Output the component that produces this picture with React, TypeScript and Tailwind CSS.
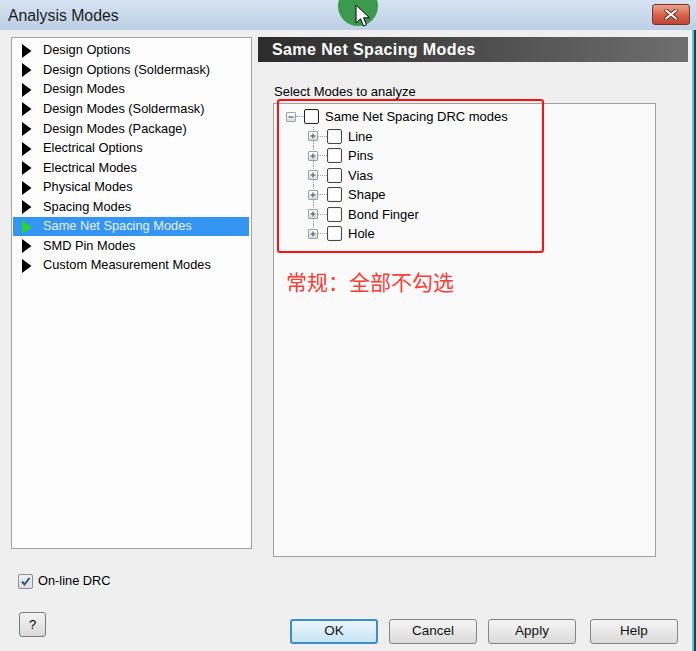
import React from "react";

const listItems = [
  "Design Options",
  "Design Options (Soldermask)",
  "Design Modes",
  "Design Modes (Soldermask)",
  "Design Modes (Package)",
  "Electrical Options",
  "Electrical Modes",
  "Physical Modes",
  "Spacing Modes",
  "Same Net Spacing Modes",
  "SMD Pin Modes",
  "Custom Measurement Modes",
];

const treeChildren = ["Line", "Pins", "Vias", "Shape", "Bond Finger", "Hole"];

function Triangle({ color }: { color: string }) {
  return (
    <svg width="10" height="14" viewBox="0 0 10 14" className="shrink-0">
      <path d="M0 0 L9.5 7 L0 14 Z" fill={color} />
    </svg>
  );
}

function ExpandBox({ plus }: { plus: boolean }) {
  return (
    <div className="relative w-[10px] h-[10px] shrink-0 border border-[#9aa0a8] rounded-[1px] bg-linear-to-b from-white to-[#dcdcdc] flex items-center justify-center">
      <svg width="8" height="8" viewBox="0 0 8 8">
        <path d="M1.5 4 H6.5" stroke="#5a6270" strokeWidth="1.2" />
        {plus && <path d="M4 1.5 V6.5" stroke="#5a6270" strokeWidth="1.2" />}
      </svg>
    </div>
  );
}

function TreeCheck({ dark }: { dark?: boolean }) {
  return (
    <div
      className={`w-[15px] h-[15px] shrink-0 rounded-[2px] bg-white border ${
        dark ? "border-[#262626]" : "border-[#474747]"
      } shadow-[inset_0_0_0_1px_#f4f4f4]`}
    />
  );
}

function Button({ label, primary }: { label: string; primary?: boolean }) {
  return (
    <div
      className={`w-[88px] h-[25px] rounded-[3px] flex items-center justify-center text-[13.5px] text-[#111] ${
        primary
          ? "border-2 border-[#3d8ec4] bg-linear-to-b from-[#eaf6fd] to-[#c6e4f5]"
          : "border border-[#858585] bg-linear-to-b from-[#f6f6f6] to-[#dadada]"
      }`}
    >
      {label}
    </div>
  );
}

export default function App() {
  return (
    <div className="relative w-[696px] h-[651px] overflow-hidden bg-[#efefef] font-['Liberation_Sans',Arial,sans-serif] text-black">
      {/* Title bar */}
      <div className="h-[30px] flex items-center pl-[8px] bg-linear-to-b from-[#d6e3f2] to-[#bccfe4]">
        <span className="text-[15.8px] text-[#1c1c1c] leading-none mt-[1px]">Analysis Modes</span>
        <div className="ml-auto mr-[6px] mb-[2px] w-[38px] h-[21px] rounded-[3px] border border-[#7a3326] bg-linear-to-b from-[#eaa592] via-[#d6654e] to-[#c2452f] flex items-center justify-center">
          <svg width="14" height="11" viewBox="0 0 14 11">
            <path d="M2 1.5 L12 9.5 M12 1.5 L2 9.5" stroke="#5a1e14" strokeWidth="3.6" strokeLinecap="round" />
            <path d="M2 1.5 L12 9.5 M12 1.5 L2 9.5" stroke="#ffffff" strokeWidth="2.2" strokeLinecap="round" />
          </svg>
        </div>
      </div>

      {/* Body */}
      <div className="flex h-[621px]">
        <div className="w-[692px] flex pl-[11px] pt-[7px]">
          {/* Left column */}
          <div className="w-[241px] flex flex-col">
            <div className="h-[512px] bg-[#fdfdfd] border border-[#a3a3a3] pt-[3px]">
              {listItems.map((item, i) => {
                const sel = i === 9;
                return (
                  <div
                    key={item}
                    className={`h-[19.55px] mx-px mr-[2px] flex items-center pl-[9px] ${
                      sel ? "bg-[#3595f2]" : ""
                    }`}
                  >
                    <Triangle color={sel ? "#24d62a" : "#000000"} />
                    <span
                      className={`ml-[11px] text-[12.8px] leading-none whitespace-nowrap ${
                        sel ? "text-[#e9f1ff]" : "text-black"
                      }`}
                    >
                      {item}
                    </span>
                  </div>
                );
              })}
            </div>

            <div className="mt-[25px] h-[15px] flex items-center ml-[7px]">
              <div className="w-[15px] h-[15px] border border-[#8e8f8f] rounded-[2px] bg-linear-to-b from-[#f0f0f0] to-[#dedede] flex items-center justify-center">
                <svg width="11" height="11" viewBox="0 0 11 11">
                  <path d="M2 5.5 L4.5 8.5 L9.5 2" stroke="#2c4f8f" strokeWidth="2" fill="none" />
                </svg>
              </div>
              <span className="ml-[5px] text-[12.8px] leading-none">On-line DRC</span>
            </div>

            <div className="mt-[23px] ml-[8px] w-[27px] h-[25px] rounded-[3px] border border-[#7a7a7a] bg-linear-to-b from-[#f4f4f4] to-[#d9d9d9] flex items-center justify-center text-[13px]">
              ?
            </div>
          </div>

          {/* Right column */}
          <div className="ml-[6px] w-[430px] flex flex-col">
            <div className="h-[25px] bg-linear-to-r from-[#2c2c2c] to-[#6f6f6f] flex items-center pl-[14px]">
              <span className="text-white font-bold text-[16px] tracking-[0.4px] leading-none">
                Same Net Spacing Modes
              </span>
            </div>

            <div className="mt-[22px] ml-[16px] text-[13px] leading-[15px]">Select Modes to analyze</div>

            <div className="relative mt-[4px] ml-[15px] w-[383px] h-[454px] bg-[#fafafb] border border-[#a0a0a0] pt-[3px]">
              {/* root row */}
              <div className="h-[19.5px] flex items-center pl-[12px]">
                <ExpandBox plus={false} />
                <div className="w-[8px] border-t border-dotted border-[#a0a0a0]" />
                <TreeCheck dark />
                <span className="ml-[6px] text-[13px] leading-none whitespace-nowrap">Same Net Spacing DRC modes</span>
              </div>
              {treeChildren.map((c, i) => (
                <div key={c} className="h-[19.5px] flex items-center pl-[34px]">
                  <div className="relative w-[10px] h-full flex items-center">
                    <div
                      className={`absolute left-[5px] top-0 w-0 border-l border-dotted border-[#a0a0a0] ${
                        i === treeChildren.length - 1 ? "h-1/2" : "h-full"
                      }`}
                    />
                    <ExpandBox plus />
                  </div>
                  <div className="w-[9px] border-t border-dotted border-[#a0a0a0]" />
                  <TreeCheck />
                  <span className="ml-[6px] text-[13px] leading-none whitespace-nowrap">{c}</span>
                </div>
              ))}

              <div className="mt-[25px] ml-[12px] text-[21px] leading-[25px] text-[#ff3a32] font-['Noto_Sans_CJK_SC','Noto_Sans_CJK_JP',sans-serif]">
                常规：全部不勾选
              </div>

              {/* red annotation box */}
              <div className="absolute left-[3px] top-[-5px] w-[267px] h-[154px] border-[2.5px] border-[#ff1010] rounded-[3px]" />
            </div>

            <div className="mt-[62px] pl-[32px] flex">
              <Button label="OK" primary />
              <div className="ml-[11px]">
                <Button label="Cancel" />
              </div>
              <div className="ml-[11px]">
                <Button label="Apply" />
              </div>
              <div className="ml-[14px]">
                <Button label="Help" />
              </div>
            </div>
          </div>
        </div>

        {/* window frame strip */}
        <div className="w-[4px] flex">
          <div className="w-[1.5px] bg-[#5cc6e6]" />
          <div className="flex-1 bg-[#2e3b40]" />
        </div>
      </div>

      {/* recording cursor highlight */}
      <div className="absolute left-[338px] top-[-14px] w-[40px] h-[40px] rounded-full bg-[#3c9a4f]" />
      <svg className="absolute left-[355px] top-[4px]" width="16" height="24" viewBox="0 0 16 24">
        <path
          d="M1 1 L1 19 L5.5 14.8 L8.5 22 L11.5 20.8 L8.6 13.8 L14.5 13.8 Z"
          fill="#ffffff"
          stroke="#000000"
          strokeWidth="1"
          strokeLinejoin="round"
        />
      </svg>
    </div>
  );
}
